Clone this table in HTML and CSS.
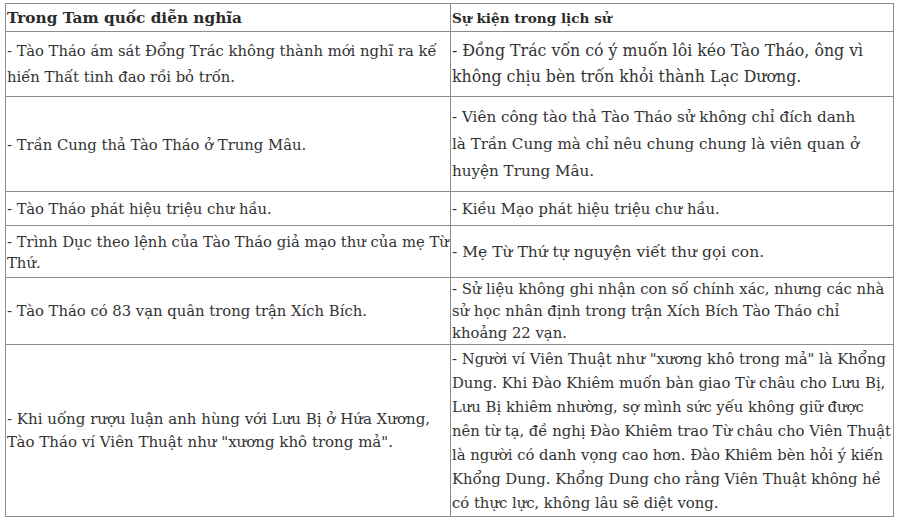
FILE: index.html
```html
<!DOCTYPE html>
<html lang="vi">
<head>
<meta charset="utf-8">
<title>So sánh</title>
<link rel="stylesheet" href="styles.css">
</head>
<body>
<table class="compare">
  <tr class="r-head">
    <th class="h-left">Trong Tam quốc diễn nghĩa</th>
    <th class="h-right">Sự kiện trong lịch sử</th>
  </tr>
  <tr class="r1">
    <td>- Tào Tháo ám sát Đổng Trác không thành mới nghĩ ra kế<br>hiến Thất tinh đao rồi bỏ trốn.</td>
    <td class="big">- Đồng Trác vốn có ý muốn lôi kéo Tào Tháo, ông vì<br>không chịu bèn trốn khỏi thành Lạc Dương.</td>
  </tr>
  <tr class="r2">
    <td>- Trần Cung thả Tào Tháo ở Trung Mâu.</td>
    <td class="mid">- Viên công tào thả Tào Tháo sử không chỉ đích danh<br>là Trần Cung mà chỉ nêu chung chung là viên quan ở<br>huyện Trung Mâu.</td>
  </tr>
  <tr class="r3">
    <td>- Tào Tháo phát hiệu triệu chư hầu.</td>
    <td>- Kiều Mạo phát hiệu triệu chư hầu.</td>
  </tr>
  <tr class="r4">
    <td>- Trình Dục theo lệnh của Tào Tháo giả mạo thư của mẹ Từ<br>Thứ.</td>
    <td class="mid2">- Mẹ Từ Thứ tự nguyện viết thư gọi con.</td>
  </tr>
  <tr class="r5">
    <td>- Tào Tháo có 83 vạn quân trong trận Xích Bích.</td>
    <td>- Sử liệu không ghi nhận con số chính xác, nhưng các nhà<br>sử học nhân định trong trận Xích Bích Tào Tháo chỉ<br>khoảng 22 vạn.</td>
  </tr>
  <tr class="r6">
    <td class="mid3">- Khi uống rượu luận anh hùng với Lưu Bị ở Hứa Xương,<br>Tào Tháo ví Viên Thuật như "xương khô trong mả".</td>
    <td>- Người ví Viên Thuật như "xương khô trong mả" là Khổng<br>Dung. Khi Đào Khiêm muốn bàn giao Từ châu cho Lưu Bị,<br>Lưu Bị khiêm nhường, sợ mình sức yếu không giữ được<br>nên từ tạ, đề nghị Đào Khiêm trao Từ châu cho Viên Thuật<br>là người có danh vọng cao hơn. Đào Khiêm bèn hỏi ý kiến<br>Khổng Dung. Khổng Dung cho rằng Viên Thuật không hề<br>có thực lực, không lâu sẽ diệt vong.</td>
  </tr>
</table>
</body>
</html>
```

FILE: styles.css
```css
html, body {
  margin: 0;
  background: #ffffff;
}
body {
  padding: 3px 6px 0 5px;
  font-family: "DejaVu Serif", "Liberation Serif", serif;
  color: #333333;
}
.compare {
  width: 889px;
  border-collapse: collapse;
  border: 1px solid #555555;
  table-layout: fixed;
}
.compare th,
.compare td {
  border: 1px solid #8c8c8c;
  padding: 0 1px;
  vertical-align: middle;
  text-align: left;
  white-space: nowrap;
  overflow: hidden;
}
.compare th:first-child,
.compare td:first-child {
  width: 442px;
}
.compare th {
  font-weight: bold;
  line-height: 20px;
  color: #2b2b2b;
}
.h-left { font-size: 15.3px; }
.h-right { font-size: 13.6px; }
.compare td {
  font-size: 14.8px;
  line-height: 24px;
}
.compare td.big { font-size: 15.8px; }
.compare td.mid { font-size: 15.15px; }
.compare td.mid2 { font-size: 15.5px; }
.compare td.mid3 { font-size: 15px; }
.r-head { height: 28px; }
.r1 { height: 65px; }
.r2 { height: 95px; }
.r3 { height: 34px; }
.r4 { height: 52px; }
.r5 { height: 66px; }
.r6 { height: 172px; }
.r1 td { line-height: 26px; }
.r2 td { line-height: 27px; }
.r4 td:first-child { line-height: 21px; }
.r5 td { line-height: 22px; }
.r6 td:first-child { line-height: 23px; }
.r6 td:last-child { line-height: 24px; }
```
